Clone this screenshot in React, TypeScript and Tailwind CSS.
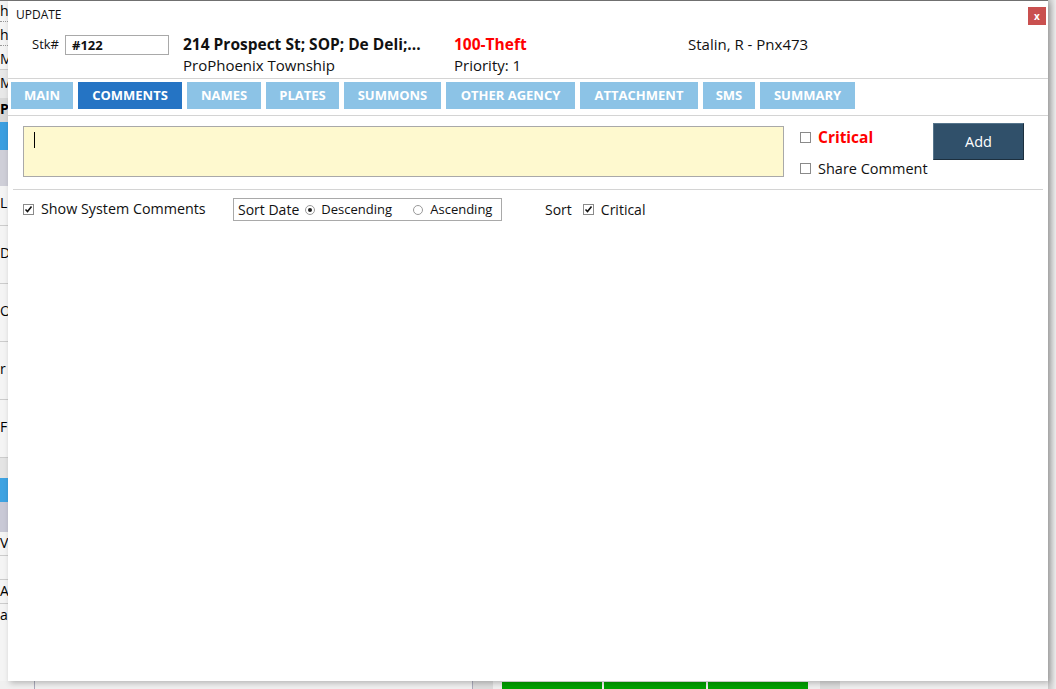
import React from "react";

const tabs = [
  { label: "MAIN", w: "w-[62px]" },
  { label: "COMMENTS", w: "w-[104px]", active: true },
  { label: "NAMES", w: "w-[74px]" },
  { label: "PLATES", w: "w-[73px]" },
  { label: "SUMMONS", w: "w-[97px]" },
  { label: "OTHER AGENCY", w: "w-[129px]" },
  { label: "ATTACHMENT", w: "w-[118px]" },
  { label: "SMS", w: "w-[52px]" },
  { label: "SUMMARY", w: "w-[95px]" },
];

function Check({ checked }: { checked?: boolean }) {
  return (
    <span className="w-[11px] h-[11px] border border-[#8a8a8a] bg-white flex items-center justify-center shrink-0">
      {checked && (
        <svg width="9" height="9" viewBox="0 0 9 9">
          <path d="M1.5 4.5 L3.5 6.5 L7.5 1.5" stroke="#111" strokeWidth="1.6" fill="none" />
        </svg>
      )}
    </span>
  );
}

function Radio({ checked }: { checked?: boolean }) {
  return (
    <span className="w-[10px] h-[10px] rounded-full border border-[#9a9a9a] bg-white flex items-center justify-center shrink-0">
      {checked && <span className="w-[4px] h-[4px] rounded-full bg-[#222]" />}
    </span>
  );
}

function Backdrop() {
  return (
    <>
      <div className="absolute left-0 top-0 w-[8px] h-full bg-[#f4f4f4] flex flex-col text-[14px] text-black font-['Open_Sans',sans-serif] leading-none">
        <div className="h-[22px] pt-[4px] border-b border-dotted border-[#999]">h</div>
        <div className="h-[24px] pt-[6px] border-b border-dotted border-[#999]">h</div>
        <div className="h-[24px] pt-[6px] border-b border-[#ccc]">M</div>
        <div className="h-[28px] pt-[6px] bg-[#e8e8e8]">M</div>
        <div className="h-[24px] pt-[4px] font-bold bg-[#d8d8d8]">P</div>
        <div className="h-[28px] bg-[#3a9ee0]" />
        <div className="h-[36px] bg-[#cfcfd8]" />
        <div className="h-[40px] pt-[10px] border-b border-[#ccc]">L</div>
        <div className="h-[58px] pt-[20px] border-b border-[#ccc]">D</div>
        <div className="h-[58px] pt-[20px] border-b border-[#ccc]">O</div>
        <div className="h-[58px] pt-[20px] border-b border-[#ccc]">r</div>
        <div className="h-[58px] pt-[20px] border-b border-[#ccc]">F</div>
        <div className="h-[20px] bg-[#e4e4e4]" />
        <div className="h-[24px] bg-[#3ea3e2]" />
        <div className="h-[30px] bg-[#c9c9d6]" />
        <div className="h-[24px] pt-[4px] border-b border-[#ccc]">V</div>
        <div className="h-[24px] border-b border-[#ccc]" />
        <div className="h-[24px] pt-[4px] border-b border-[#ccc]">A</div>
        <div className="h-[24px] pt-[4px]">a</div>
      </div>
      <div className="absolute left-0 top-[681px] w-full h-[8px] bg-[#f0f0f0] flex items-start">
        <div className="w-[35px] h-full border-r border-[#aab]" />
        <div className="w-[438px] h-full border-r border-[#aab]" />
        <div className="w-[20px] h-full bg-[#ddd]" />
        <div className="flex gap-[2px] ml-[9px] mt-[1px]">
          <div className="w-[100px] h-[8px] bg-[#00a000]" />
          <div className="w-[102px] h-[8px] bg-[#00a000]" />
          <div className="w-[100px] h-[8px] bg-[#00a000]" />
        </div>
        <div className="w-[20px] h-full bg-[#ddd] ml-[12px]" />
      </div>
      <div className="absolute left-0 top-0 w-[1048px] h-[1px] bg-[#777]" />
      <div className="absolute right-0 top-0 w-[8px] h-full bg-gradient-to-r from-[#c8c8c8] to-[#ececec]" />
    </>
  );
}

export default function App() {
  return (
    <div className="relative w-[1056px] h-[689px] overflow-hidden bg-[#ececec] font-['Open_Sans',sans-serif] text-[#111]">
      <Backdrop />
      <div className="absolute left-[8px] top-[1px] w-[1040px] h-[680px] bg-white shadow-[2px_2px_6px_rgba(0,0,0,0.25)] flex flex-col">
        {/* title */}
        <div className="flex items-start justify-between h-[26px] pl-[8px] pr-[2px] pt-[8px]">
          <span className="text-[12px] leading-none">UPDATE</span>
          <button className="w-[18px] h-[18px] bg-[#c9504f] text-white text-[10px] font-bold leading-none flex items-center justify-center -mt-[2px]">
            x
          </button>
        </div>

        {/* header */}
        <div className="flex h-[51px] pt-[7px] text-[15px] leading-[21px]">
          <div className="flex items-start w-[175px] pl-[24px] pt-[1px]">
            <span className="text-[13px] mr-[6px] leading-[19px]">Stk#</span>
            <div className="w-[104px] h-[20px] border border-[#a9a9a9] px-[6px] text-[13px] font-bold leading-[18px]">#122</div>
          </div>
          <div className="w-[271px]">
            <div className="font-bold whitespace-nowrap text-[15.5px]">214 Prospect St; SOP; De Deli;...</div>
            <div>ProPhoenix Township</div>
          </div>
          <div className="w-[234px]">
            <div className="font-bold text-[#f00] text-[15.5px]">100-Theft</div>
            <div>Priority: 1</div>
          </div>
          <div>Stalin, R - Pnx473</div>
        </div>

        <div className="h-px bg-[#d4d4d4]" />

        {/* tabs */}
        <div className="flex gap-[5px] pl-[3px] pt-[3px] h-[36px]">
          {tabs.map((t) => (
            <div
              key={t.label}
              className={`${t.w} h-[27px] flex items-center justify-center text-[13px] font-bold text-white ${
                t.active ? "bg-[#2574c4]" : "bg-[#8cc3e6]"
              }`}
            >
              {t.label}
            </div>
          ))}
        </div>

        <div className="h-px bg-[#d4d4d4]" />

        {/* comment entry */}
        <div className="flex pt-[7px] h-[73px]">
          <div className="ml-[15px] mt-[3px] w-[761px] h-[51px] bg-[#fef9cf] border border-[#a9a9a9] pl-[10px] pt-[5px]">
            <div className="w-px h-[16px] bg-black" />
          </div>
          <div className="ml-[16px] w-[125px] pt-[7px] flex flex-col gap-[16px] text-[14.5px] leading-none whitespace-nowrap">
            <div className="flex items-center gap-[7px]">
              <Check />
              <span className="text-[15.5px] font-bold text-[#f00]">Critical</span>
            </div>
            <div className="flex items-center gap-[7px]">
              <Check />
              <span>Share Comment</span>
            </div>
          </div>
          <button className="ml-[8px] w-[91px] h-[37px] bg-[#30506a] border border-[#1c2f3e] border-t-[#56758c] border-l-[#56758c] text-white text-[14.5px]">
            Add
          </button>
        </div>

        <div className="h-px bg-[#d4d4d4] mx-[5px]" />

        {/* options */}
        <div className="flex items-center pt-[8px] text-[14px] leading-none">
          <div className="flex items-center gap-[7px] ml-[15px] w-[210px]">
            <Check checked />
            <span className="text-[14.3px]">Show System Comments</span>
          </div>
          <div className="w-[269px] h-[23px] border border-[#a9a9a9] flex items-center pl-[4px]">
            <span className="mr-[6px]">Sort Date</span>
            <Radio checked />
            <span className="ml-[6px] text-[13px] w-[92px]">Descending</span>
            <Radio />
            <span className="ml-[7px] text-[13px]">Ascending</span>
          </div>
          <span className="ml-[43px]">Sort</span>
          <span className="ml-[11px] mr-[7px]">
            <Check checked />
          </span>
          <span>Critical</span>
        </div>
      </div>
    </div>
  );
}
